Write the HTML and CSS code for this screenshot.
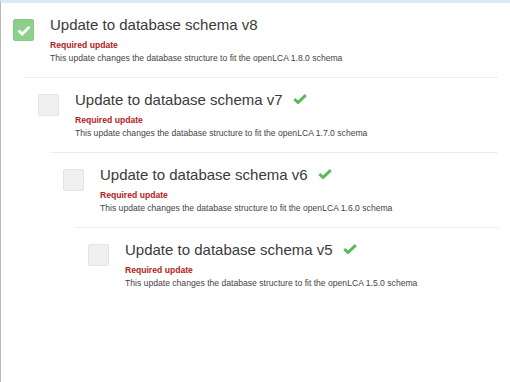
FILE: index.html
```html
<!DOCTYPE html>
<html lang="en">
<head>
    <meta charset="UTF-8">
    <title>Database updates</title>
    <link rel="stylesheet" href="styles.css">
</head>
<body>
    <div class="page">
        <div class="update">
            <div class="update-head">
                <span class="checkbox checked">
                    <svg width="14" height="11" viewBox="0 0 14 11"><path d="M1.5 5.5 L5.2 9 L12.5 1.8" fill="none" stroke="#fff" stroke-width="2.8"/></svg>
                </span>
                <div class="update-text">
                    <h4>Update to database schema v8</h4>
                    <div class="required">Required update</div>
                    <div class="desc">This update changes the database structure to fit the openLCA 1.8.0 schema</div>
                </div>
            </div>
            <div class="divider"></div>

            <div class="update">
                <div class="update-head">
                    <span class="checkbox"></span>
                    <div class="update-text">
                        <h4>Update to database schema v7
                            <svg class="done" width="14" height="10" viewBox="0 0 14 10"><path d="M1.3 5 L5 8.5 L12.8 1.2" fill="none" stroke="#5cb85c" stroke-width="3"/></svg>
                        </h4>
                        <div class="required">Required update</div>
                        <div class="desc">This update changes the database structure to fit the openLCA 1.7.0 schema</div>
                    </div>
                </div>
                <div class="divider"></div>

                <div class="update">
                    <div class="update-head">
                        <span class="checkbox"></span>
                        <div class="update-text">
                            <h4>Update to database schema v6
                                <svg class="done" width="14" height="10" viewBox="0 0 14 10"><path d="M1.3 5 L5 8.5 L12.8 1.2" fill="none" stroke="#5cb85c" stroke-width="3"/></svg>
                            </h4>
                            <div class="required">Required update</div>
                            <div class="desc">This update changes the database structure to fit the openLCA 1.6.0 schema</div>
                        </div>
                    </div>
                    <div class="divider"></div>

                    <div class="update">
                        <div class="update-head">
                            <span class="checkbox"></span>
                            <div class="update-text">
                                <h4>Update to database schema v5
                                    <svg class="done" width="14" height="10" viewBox="0 0 14 10"><path d="M1.3 5 L5 8.5 L12.8 1.2" fill="none" stroke="#5cb85c" stroke-width="3"/></svg>
                                </h4>
                                <div class="required">Required update</div>
                                <div class="desc">This update changes the database structure to fit the openLCA 1.5.0 schema</div>
                            </div>
                        </div>
                    </div>
                </div>
            </div>
        </div>
    </div>
</body>
</html>
```

FILE: styles.css
```css
html, body {
    margin: 0;
    height: 100%;
}
body {
    font-family: "Liberation Sans", Arial, sans-serif;
    background-color: white;
    color: #333;
}
.page {
    box-sizing: border-box;
    min-height: 100%;
    border-top: 3px solid #dde8f4;
    border-left: 1px solid #b8b8b8;
    padding: 0 12px 0 12px;
}
.update .update {
    margin-left: 25px;
}
.update-head {
    display: flex;
    gap: 16px;
    padding: 13px 0 12px 0;
}
.checkbox {
    flex: none;
    box-sizing: border-box;
    width: 21px;
    height: 22px;
    margin-top: 3px;
    border: 1px solid #e4e4e4;
    border-radius: 2px;
    background-color: #f0f0f0;
    display: flex;
    align-items: center;
    justify-content: center;
}
.checkbox.checked {
    background-color: #8ecf8b;
    border-color: #86c983;
}
.update-text h4 {
    margin: 0;
    font-size: 15px;
    line-height: 17px;
    font-weight: normal;
    color: #3a3a3a;
    display: flex;
    align-items: center;
    gap: 10px;
}
.done {
    margin-top: -1px;
}
.required {
    margin-top: 6px;
    font-size: 8.6px;
    line-height: 13px;
    font-weight: bold;
    color: #b22222;
}
.desc {
    font-size: 8.6px;
    line-height: 13px;
    color: #444;
}
.divider {
    height: 1px;
    margin-left: 12px;
    background-color: #ececec;
}
```
